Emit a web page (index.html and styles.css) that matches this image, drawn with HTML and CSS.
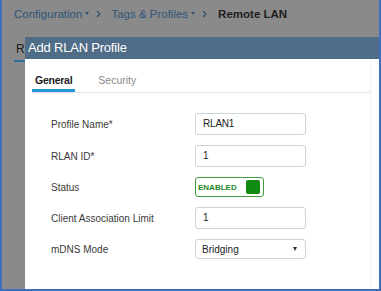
FILE: index.html
```html
<!DOCTYPE html>
<html>
<head>
<meta charset="utf-8">
<link rel="stylesheet" href="styles.css">
</head>
<body>
<div class="frame">
  <div class="crumbs">
    <span class="link">Configuration</span><span class="caret"></span>
    <svg class="chev" width="5" height="8" viewBox="0 0 5 8"><path d="M1 1 L4 4 L1 7" fill="none" stroke="#2d4f6c" stroke-width="1.1"/></svg>
    <span class="link">Tags &amp; Profiles</span><span class="caret"></span>
    <svg class="chev" width="5" height="8" viewBox="0 0 5 8"><path d="M1 1 L4 4 L1 7" fill="none" stroke="#2d4f6c" stroke-width="1.1"/></svg>
    <span class="current">Remote LAN</span>
  </div>
  <div class="stage">
    <div class="behind"><div class="behind-tab">Rl</div></div>
    <div class="modal">
      <div class="modal-head">Add RLAN Profile</div>
      <div class="modal-body">
        <div class="tabs">
          <div class="tab active">General</div>
          <div class="tab">Security</div>
        </div>
        <div class="form">
          <div class="label">Profile Name*</div>
          <div class="field">RLAN1</div>
          <div class="label">RLAN ID*</div>
          <div class="field">1</div>
          <div class="label">Status</div>
          <div class="toggle"><span class="toggle-text">ENABLED</span><span class="knob"></span></div>
          <div class="label">Client Association Limit</div>
          <div class="field">1</div>
          <div class="label">mDNS Mode</div>
          <div class="select"><span>Bridging</span><span class="arrow"></span></div>
        </div>
      </div>
    </div>
  </div>
</div>
</body>
</html>
```
FILE: styles.css
```css
* { box-sizing: border-box; }
html, body { margin: 0; padding: 0; }
body { font-family: "Liberation Sans", Arial, sans-serif; }

.frame {
  width: 381px;
  height: 291px;
  border: 2px solid #3b6fbd;
  border-top: none;
  background: #8a8a8a;
  display: flex;
  flex-direction: column;
  overflow: hidden;
}

.crumbs {
  height: 28px;
  margin-bottom: 9px;
  padding-left: 12px;
  display: flex;
  align-items: center;
  font-size: 11.5px;
  white-space: nowrap;
}
.link { color: #2d5578; }
.current { color: #1e1e1e; font-weight: bold; margin-left: 1px; }
.caret {
  display: inline-block;
  width: 0; height: 0;
  border-left: 2.5px solid transparent;
  border-right: 2.5px solid transparent;
  border-top: 3px solid #2d5578;
  margin: 0 0 2px 3px;
}
.chev { margin: 0 10px 0 7px; }

.stage {
  flex: 1;
  display: flex;
  min-height: 0;
}
.behind {
  width: 23px;
  padding-left: 12px;
  overflow: hidden;
  flex: none;
}
.behind-tab {
  height: 25px;
  padding: 5px 0 0 2px;
  font-size: 12px;
  color: #1b1b1b;
  border-bottom: 2px solid #2e6f9e;
  white-space: nowrap;
}

.modal {
  flex: 1;
  display: flex;
  flex-direction: column;
  background: #fff;
  min-width: 0;
}
.modal-head {
  height: 22px;
  background: #4f6d87;
  color: #fff;
  font-size: 13px;
  letter-spacing: -0.2px;
  line-height: 22px;
  padding-left: 3px;
  white-space: nowrap;
}
.modal-body {
  flex: 1;
  margin-right: 8px;
  border-right: 1px solid #f1f3f4;
}

.tabs {
  display: flex;
  margin-left: 7px;
  border-bottom: 1px solid #dfe4e8;
}
.tab {
  padding: 14px 3px 2px 3px;
  line-height: 14px;
  font-size: 10.5px;
  color: #8a8a8a;
  border-bottom: 3px solid transparent;
}
.tab.active {
  color: #1e1e1e;
  font-weight: bold;
  letter-spacing: -0.25px;
  border-bottom-color: #2595d3;
}
.tab + .tab { margin-left: 20px; }

.form {
  padding: 20px 0 0 26px;
  display: grid;
  grid-template-columns: 144px 111px;
  row-gap: 10px;
  align-items: center;
}
.label {
  font-size: 10px;
  color: #3a3a3a;
  white-space: nowrap;
}
.field {
  height: 22px;
  border: 1px solid #cad4db;
  border-radius: 3px;
  padding-left: 7px;
  font-size: 10px;
  line-height: 20px;
  color: #222;
  letter-spacing: -0.2px;
}
.toggle {
  width: 69px;
  height: 20px;
  border: 1px solid #3f9a3f;
  border-radius: 3px;
  padding: 0 3px 0 2px;
  display: flex;
  align-items: center;
  justify-content: space-between;
}
.toggle-text {
  font-size: 8px;
  font-weight: bold;
  color: #1f8a1f;
}
.knob {
  width: 14px;
  height: 14px;
  background: #108a10;
  border-radius: 2px;
}
.select {
  height: 20px;
  border: 1px solid #cad4db;
  border-radius: 3px;
  padding: 0 8px 0 6px;
  display: flex;
  align-items: center;
  justify-content: space-between;
  font-size: 10px;
  color: #222;
}
.arrow {
  width: 0; height: 0;
  border-left: 2.5px solid transparent;
  border-right: 2.5px solid transparent;
  border-top: 4px solid #333;
}
```
